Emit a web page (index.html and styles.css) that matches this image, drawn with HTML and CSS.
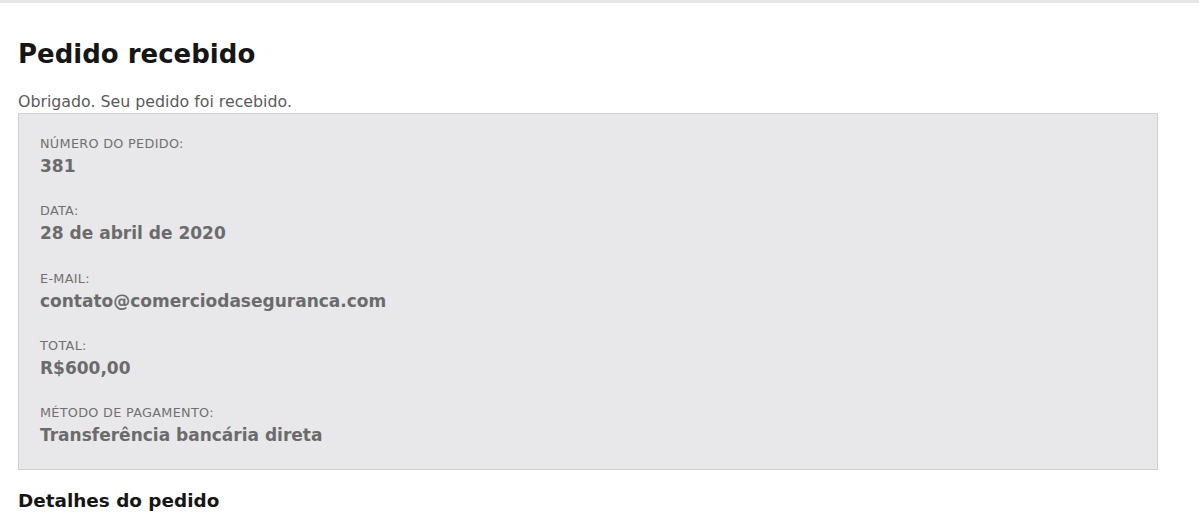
FILE: index.html
```html
<!DOCTYPE html>
<html lang="pt-BR">
<head>
    <meta charset="UTF-8">
    <meta name="viewport" content="width=device-width, initial-scale=1.0">
    <title>Pedido recebido</title>
    <link rel="stylesheet" href="styles.css">
</head>
<body>
    <div class="topbar"></div>
    <div class="page">
        <h1>Pedido recebido</h1>
        <p class="thanks">Obrigado. Seu pedido foi recebido.</p>

        <ul class="overview">
            <li>
                <span class="label">Número do pedido:</span>
                <strong>381</strong>
            </li>
            <li>
                <span class="label">Data:</span>
                <strong>28 de abril de 2020</strong>
            </li>
            <li>
                <span class="label">E-mail:</span>
                <strong>contato@comerciodaseguranca.com</strong>
            </li>
            <li>
                <span class="label">Total:</span>
                <strong>R$600,00</strong>
            </li>
            <li>
                <span class="label">Método de pagamento:</span>
                <strong>Transferência bancária direta</strong>
            </li>
        </ul>

        <h2>Detalhes do pedido</h2>
    </div>
</body>
</html>
```

FILE: styles.css
```css
body {
    font-family: "DejaVu Sans", sans-serif;
    background-color: #fff;
    margin: 0;
    color: #555;
}
.topbar {
    height: 3px;
    background-color: #e6e6e8;
}
.page {
    width: 1140px;
    padding: 0 18px;
}
h1 {
    font-size: 26px;
    font-weight: bold;
    color: #161616;
    margin: 35px 0 0;
    line-height: 32px;
}
.thanks {
    font-size: 15.8px;
    margin: 22px 0 1px;
    line-height: 20px;
    color: #5a5a5a;
}
.overview {
    list-style: none;
    margin: 0;
    padding: 22px 21px 23px;
    background-color: #e8e8ea;
    border: 1px solid #cfcfd1;
}
.overview li {
    margin-bottom: 26.3px;
}
.overview li:last-child {
    margin-bottom: 0;
}
.label {
    display: block;
    text-transform: uppercase;
    font-size: 12.8px;
    letter-spacing: 0.3px;
    line-height: 16px;
    margin-bottom: 3px;
    color: #707070;
}
.overview strong {
    display: block;
    font-size: 17px;
    line-height: 22px;
    color: #6b6b6b;
}
h2 {
    font-size: 18.4px;
    font-weight: bold;
    color: #161616;
    margin: 18.6px 0 0;
    line-height: 24px;
}
```
